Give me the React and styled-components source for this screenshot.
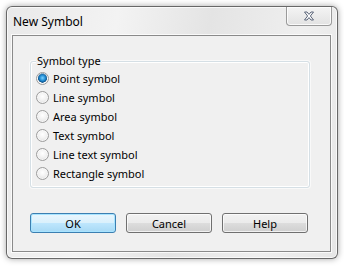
import React from 'react';
import styled, { createGlobalStyle } from 'styled-components';

const Global = createGlobalStyle`
  html, body {
    margin: 0;
    padding: 0;
    background: #ffffff;
  }
  body {
    font-family: "Noto Sans", "Open Sans", sans-serif;
    font-size: 11px;
    color: #000;
  }
`;

const Page = styled.div`
  width: 344px;
  height: 266px;
  padding: 6px 0 0 6px;
  box-sizing: border-box;
`;

const Window = styled.div`
  width: 332px;
  height: 253px;
  box-sizing: border-box;
  border: 1px solid rgba(60, 60, 60, 0.75);
  border-radius: 6px;
  background: linear-gradient(100deg, #e9e9e9 0%, #f3f3f3 30%, #e4e4e4 55%, #efefef 80%, #e6e6e6 100%);
  box-shadow: 0 0 6px rgba(0, 0, 0, 0.35), inset 0 0 0 1px rgba(255, 255, 255, 0.7);
  display: flex;
  flex-direction: column;
`;

const TitleBar = styled.div`
  height: 28px;
  flex: none;
  display: flex;
  justify-content: space-between;
  align-items: flex-start;
  padding: 0 5px 0 6px;
`;

const Title = styled.div`
  padding-top: 7px;
  font-size: 12px;
  line-height: 16px;
  color: #000;
`;

const CloseButton = styled.div`
  width: 46px;
  height: 19px;
  box-sizing: border-box;
  border: 1px solid #9a9a9a;
  border-top: none;
  border-radius: 0 0 4px 4px;
  background: linear-gradient(#f4f4f4, #e2e2e2);
  box-shadow: inset 0 0 0 1px rgba(255, 255, 255, 0.8);
  display: flex;
  align-items: center;
  justify-content: center;
`;

const Client = styled.div`
  flex: 1;
  margin: 0 6px 6px 5px;
  border: 1px solid #8a8a8a;
  background: #f0f0f0;
  box-shadow: 0 0 0 1px rgba(255, 255, 255, 0.75);
  padding: 25px 20px 0 17px;
  display: flex;
  flex-direction: column;
`;

const Group = styled.div`
  position: relative;
  height: 127px;
  box-sizing: border-box;
  padding: 7px 0 0 5px;
  border: 1px solid #d5dfe5;
  border-radius: 3px;
  box-shadow: inset 0 0 0 1px #ffffff, 0 0 0 1px rgba(255, 255, 255, 0.6);
`;

const Caption = styled.span`
  position: absolute;
  top: -9px;
  left: 5px;
  padding: 0 1px;
  background: #f0f0f0;
  font-size: 11px;
  line-height: 15px;
`;

const Option = styled.label`
  display: flex;
  align-items: center;
  gap: 4px;
  height: 19px;
  font-size: 11px;
`;

const Radio = styled.span`
  width: 13px;
  height: 13px;
  box-sizing: border-box;
  border-radius: 50%;
  border: 1px solid #9c9c9c;
  background: ${p =>
    p.checked
      ? 'radial-gradient(circle at 50% 45%, #7ad1ff 0%, #1f8ad1 35%, #0b4e85 55%, #f4f4f4 60%, #dcdcdc 100%)'
      : 'radial-gradient(circle at 50% 40%, #ffffff 0%, #f2f2f2 45%, #d6d6d6 100%)'};
  box-shadow: inset 0 0 0 1px rgba(255, 255, 255, 0.6);
`;

const Buttons = styled.div`
  display: flex;
  gap: 10px;
  margin-top: 25px;
`;

const Button = styled.div`
  width: 86px;
  height: 20px;
  box-sizing: border-box;
  border-radius: 3px;
  border: 1px solid ${p => (p.primary ? '#3c7fb1' : '#707070')};
  background: ${p =>
    p.primary
      ? 'linear-gradient(#eaf6fd 0%, #d9f0fc 50%, #bee6fd 51%, #a7d9f5 100%)'
      : 'linear-gradient(#f2f2f2 0%, #ebebeb 50%, #dddddd 51%, #cfcfcf 100%)'};
  box-shadow: inset 0 0 0 1px ${p => (p.primary ? '#a8e4ff' : 'rgba(255,255,255,0.7)')};
  display: flex;
  align-items: center;
  justify-content: center;
  font-size: 11px;
`;

const options = [
  'Point symbol',
  'Line symbol',
  'Area symbol',
  'Text symbol',
  'Line text symbol',
  'Rectangle symbol',
];

export default function App() {
  return (
    <Page>
      <Global />
      <Window>
        <TitleBar>
          <Title>New Symbol</Title>
          <CloseButton>
            <svg width="12" height="10" viewBox="0 0 12 10">
              <path
                d="M1.5 1 L4 1 L6 3.4 L8 1 L10.5 1 L7.4 5 L10.5 9 L8 9 L6 6.6 L4 9 L1.5 9 L4.6 5 Z"
                fill="#ffffff"
                stroke="#5a6478"
                strokeWidth="1"
                strokeLinejoin="round"
              />
            </svg>
          </CloseButton>
        </TitleBar>
        <Client>
          <Group>
            <Caption>Symbol type</Caption>
            {options.map((o, i) => (
              <Option key={o}>
                <Radio checked={i === 0} />
                {o}
              </Option>
            ))}
          </Group>
          <Buttons>
            <Button primary>OK</Button>
            <Button>Cancel</Button>
            <Button>Help</Button>
          </Buttons>
        </Client>
      </Window>
    </Page>
  );
}
